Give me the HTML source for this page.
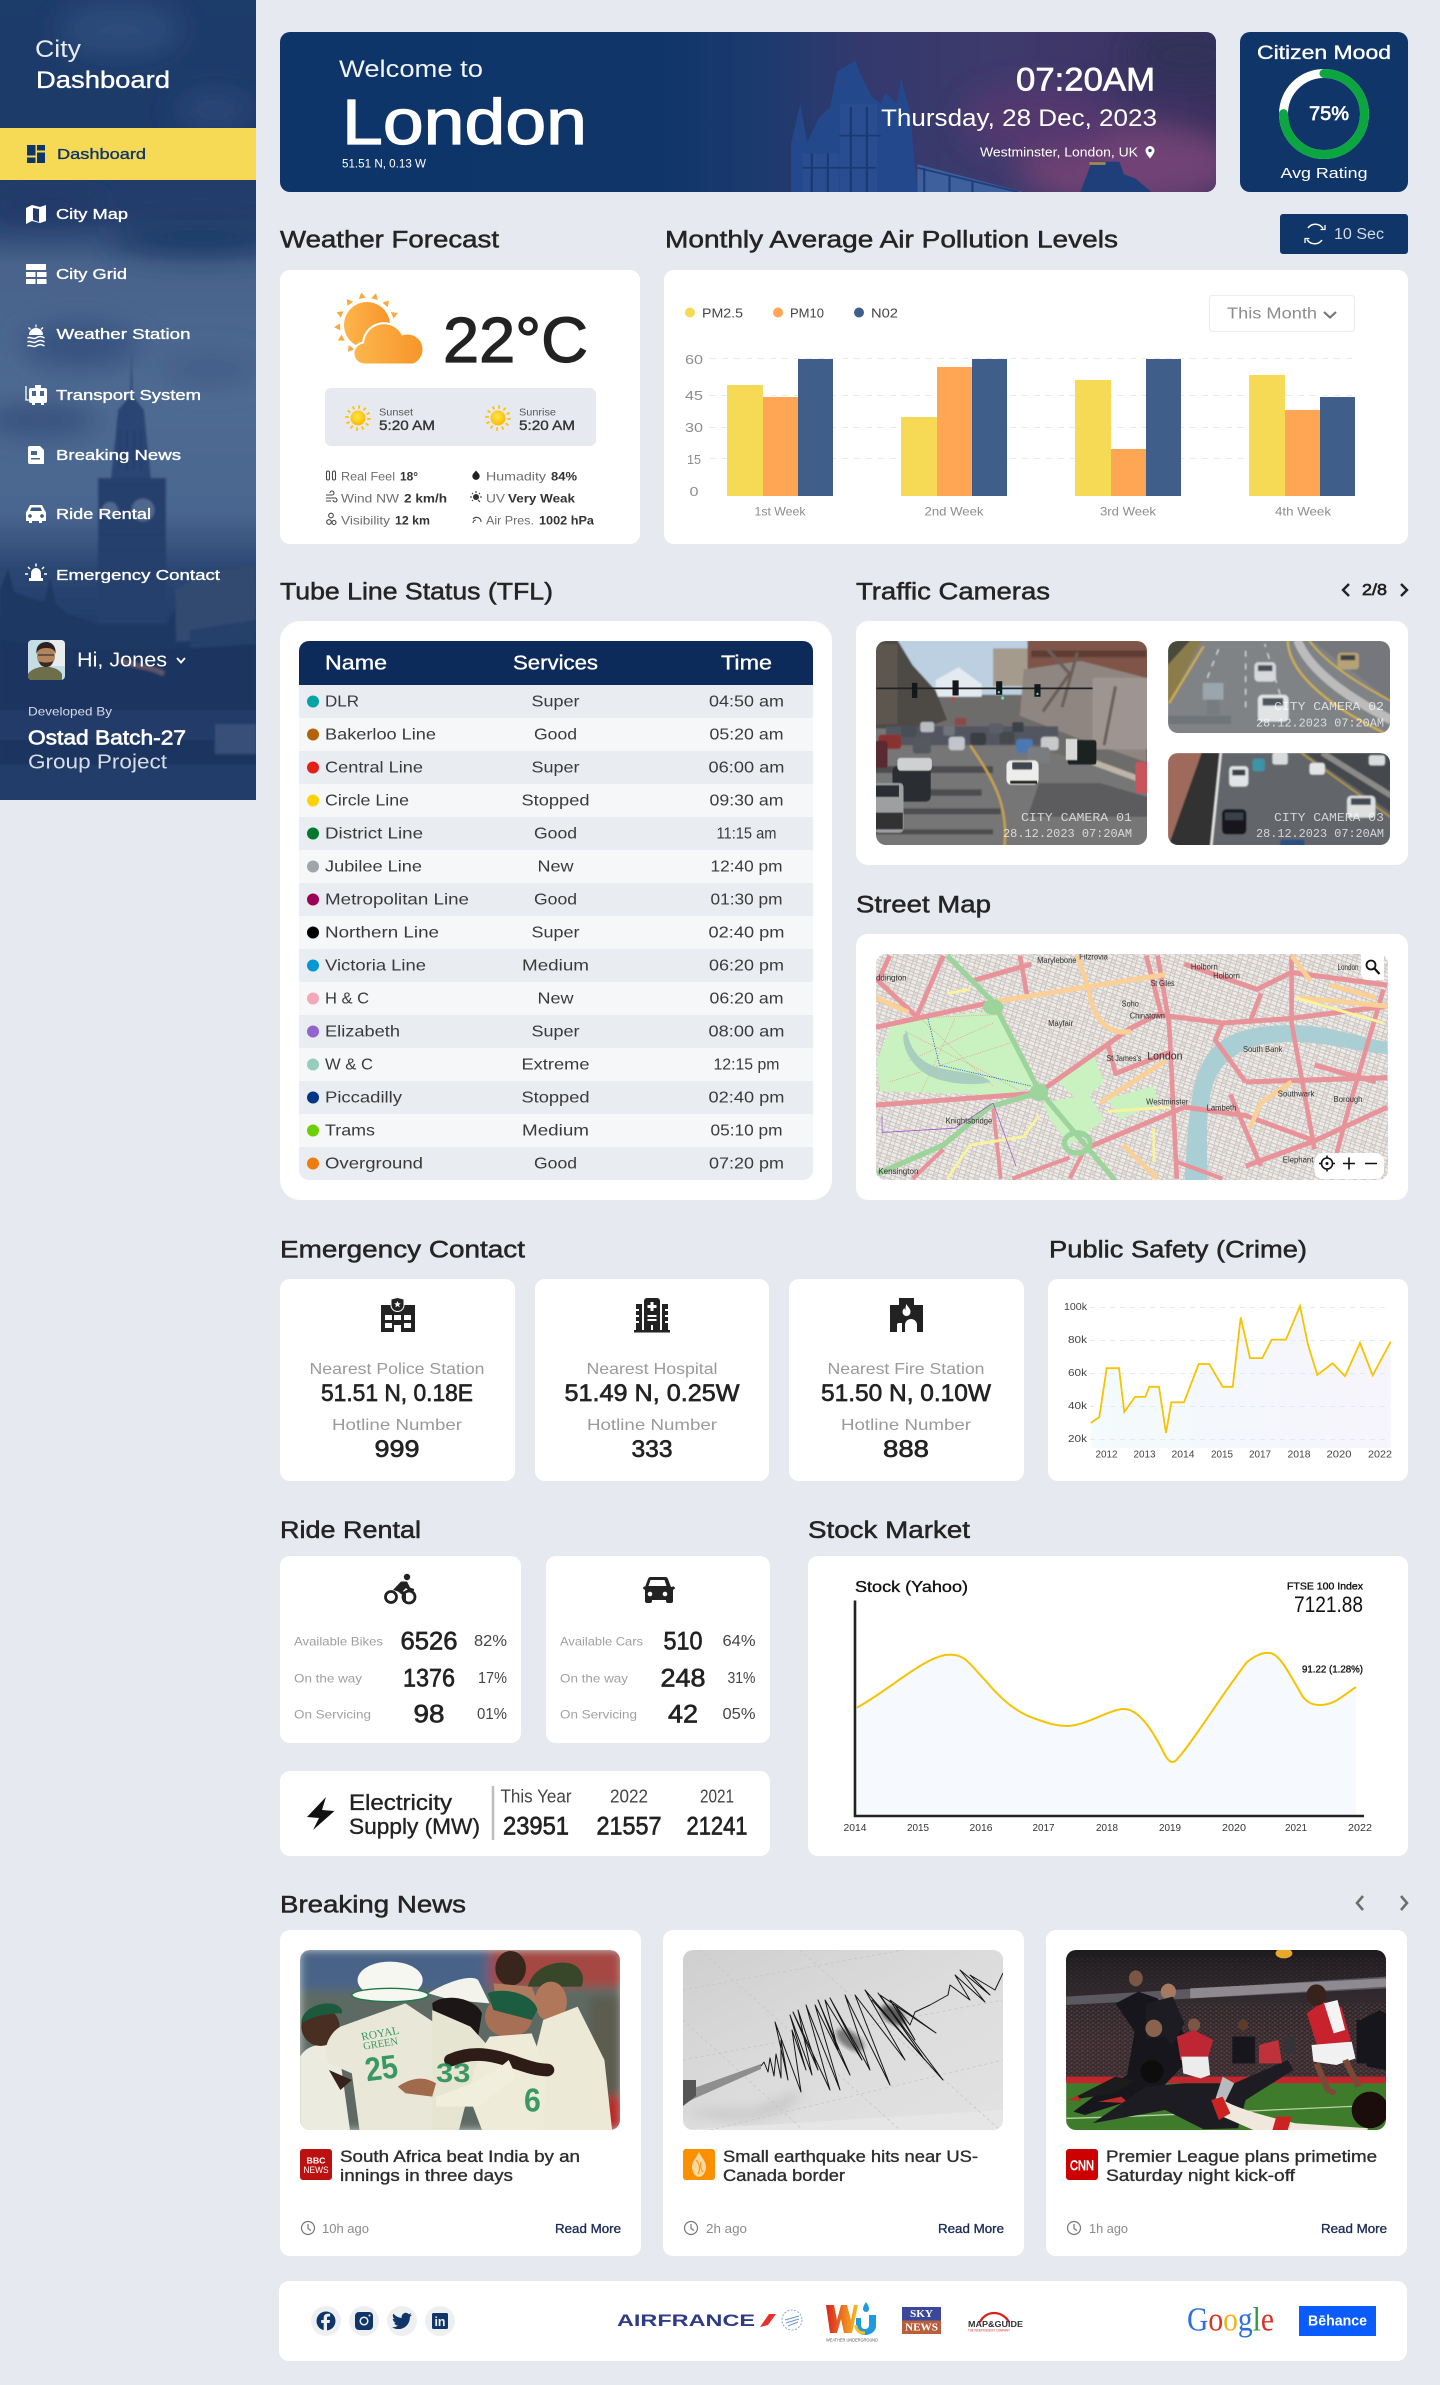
<!DOCTYPE html>
<html lang="en">
<head>
<meta charset="utf-8">
<title>City Dashboard</title>
<style>
html,body{margin:0;padding:0;background:#e6e9ef}
svg{display:block}
text{font-family:"Liberation Sans",Arial,sans-serif;fill:currentColor;dominant-baseline:central;translate:0 .7px}
.c{text-anchor:middle}
.e{text-anchor:end}
.m{stroke:currentColor;stroke-width:.35}
.m2{stroke:currentColor;stroke-width:.65}
.m3{stroke:currentColor;stroke-width:1.2;translate:0 0}
.h{font-size:24px;color:#242424;stroke:currentColor;stroke-width:.5;translate:0 1.1px}
.b{font-weight:700}
.mono{font-family:"Liberation Mono",monospace;fill:#fff;fill-opacity:.72}
.card{fill:#fff}
</style>
</head>
<body>
<svg xmlns="http://www.w3.org/2000/svg" width="1440" height="2385" viewBox="0 0 1440 2385">
<defs>
<linearGradient id="sb" gradientUnits="userSpaceOnUse" x1="0" y1="0" x2="0" y2="800">
<stop offset="0" stop-color="#1e3c6b"/><stop offset=".16" stop-color="#1c3a69"/><stop offset=".27" stop-color="#263f6d"/><stop offset=".33" stop-color="#48638c"/><stop offset=".5" stop-color="#4f6b93"/><stop offset=".64" stop-color="#4a6690"/><stop offset=".71" stop-color="#2c4773"/><stop offset=".8" stop-color="#1f3a68"/><stop offset="1" stop-color="#1e3a66"/>
</linearGradient>
<linearGradient id="hero" x1="0" y1="0" x2="1" y2="0">
<stop offset="0" stop-color="#0e3569"/><stop offset=".4" stop-color="#0f3569"/><stop offset=".52" stop-color="#1d3a6e"/><stop offset=".62" stop-color="#33396d"/><stop offset=".78" stop-color="#3f3a6c"/><stop offset="1" stop-color="#3a2f5e"/>
</linearGradient>
<linearGradient id="sunG" x1="0" y1="0" x2="1" y2="0"><stop offset="0" stop-color="#fdb64c"/><stop offset="1" stop-color="#f7952a"/></linearGradient>
<radialGradient id="yel" cx=".45" cy=".4" r=".6"><stop offset="0" stop-color="#ffe94a"/><stop offset="1" stop-color="#ffb800"/></radialGradient>
<linearGradient id="crimeA" x1="0" y1="0" x2="1" y2="0"><stop offset="0" stop-color="#f3fbfc"/><stop offset="1" stop-color="#f6f4fc"/></linearGradient>
<linearGradient id="wu" x1="0" y1="0" x2="1" y2="0"><stop offset="0" stop-color="#d8231f"/><stop offset=".6" stop-color="#f08020"/><stop offset="1" stop-color="#f5c020"/></linearGradient>
<linearGradient id="seis" x1="0" y1="0" x2="1" y2="1"><stop offset="0" stop-color="#cfcfcf"/><stop offset=".5" stop-color="#dcdcdc"/><stop offset="1" stop-color="#e2e2e2"/></linearGradient>
<linearGradient id="crowd" x1="0" y1="0" x2="0" y2="1"><stop offset="0" stop-color="#1c1a1e"/><stop offset=".3" stop-color="#2e282c"/><stop offset=".7" stop-color="#3e3034"/><stop offset="1" stop-color="#3e3034"/></linearGradient>
<pattern id="streets" width="26" height="26" patternUnits="userSpaceOnUse" patternTransform="rotate(18)">
<rect width="26" height="26" fill="#eeeae5"/><path d="M0 6H26M0 15H26M0 22H26M7 0V26M18 0V26" stroke="#c3bfbe" stroke-width="2" fill="none"/><rect x="9" y="8" width="7" height="5" fill="#e3d2d0"/>
</pattern>
<pattern id="cr" width="14" height="12" patternUnits="userSpaceOnUse"><circle cx="3" cy="3" r="2.500" fill="#6a5858"/><circle cx="10" cy="8" r="2" fill="#7a4040"/><circle cx="11" cy="2" r="1.500" fill="#141214"/><circle cx="4" cy="9" r="1.800" fill="#141214"/></pattern>
<filter id="b1" x="-5%" y="-5%" width="110%" height="110%"><feGaussianBlur stdDeviation="1"/></filter>
<filter id="b2" x="-10%" y="-10%" width="120%" height="120%"><feGaussianBlur stdDeviation="2"/></filter>
<filter id="b6" x="-20%" y="-20%" width="140%" height="140%"><feGaussianBlur stdDeviation="6"/></filter>
<filter id="b14" x="-40%" y="-40%" width="180%" height="180%"><feGaussianBlur stdDeviation="14"/></filter>
<clipPath id="cSide"><rect width="256" height="800"/></clipPath>
<clipPath id="cHero"><rect x="280" y="32" width="936" height="160" rx="10"/></clipPath>
<clipPath id="cCam1"><rect x="876" y="641" width="271" height="204" rx="10"/></clipPath>
<clipPath id="cCam2"><rect x="1168" y="641" width="222" height="92" rx="10"/></clipPath>
<clipPath id="cCam3"><rect x="1168" y="753" width="222" height="92" rx="10"/></clipPath>
<clipPath id="cMap"><rect x="876" y="954" width="512" height="226" rx="10"/></clipPath>
<clipPath id="cN1"><rect x="300" y="1950" width="320" height="180" rx="10"/></clipPath>
<clipPath id="cN2"><rect x="683" y="1950" width="320" height="180" rx="10"/></clipPath>
<clipPath id="cN3"><rect x="1066" y="1950" width="320" height="180" rx="10"/></clipPath>
<clipPath id="cAv"><rect x="28" y="640" width="37" height="40" rx="4"/></clipPath>
<clipPath id="cTb"><path d="M299 651a10 10 0 0 1 10-10h494a10 10 0 0 1 10 10v519a10 10 0 0 1-10 10H309a10 10 0 0 1-10-10z"/></clipPath>
</defs>

<rect width="1440" height="2385" fill="#e6e9ef"/>

<!-- Sidebar -->
<g clip-path="url(#cSide)">
<rect width="256" height="800" fill="#1e3c6b"/>
<g filter="url(#b1)">
<rect x="-10" y="-10" width="276" height="820" fill="url(#sb)"/>
<g filter="url(#b14)">
<ellipse cx="120" cy="30" rx="60" ry="26" fill="#2f4d7b"/>
<ellipse cx="215" cy="110" rx="40" ry="20" fill="#2a4776"/>
<ellipse cx="200" cy="238" rx="90" ry="18" fill="#1d3a68"/>
<ellipse cx="50" cy="205" rx="60" ry="14" fill="#20396a"/>
<ellipse cx="80" cy="345" rx="60" ry="22" fill="#36517f"/>
<ellipse cx="40" cy="420" rx="60" ry="16" fill="#354f7c"/>
<ellipse cx="210" cy="370" rx="50" ry="14" fill="#3f5b86"/>
</g>
<g fill="#2a4573">
<path d="M131.500 352l1.500 44 11 14 3 30 4 38H111l4-38 3-30 12-14z"/>
<path d="M98 478h68v170H98z" fill="#273f6d"/>
</g>
<g fill="#50678d"><circle cx="110" cy="510" r="8"/><circle cx="143" cy="510" r="11.500"/></g>
<g stroke="#20396a" stroke-width="1" fill="none"><path d="M120 430v40M127 430v40M134 430v40M141 430v40M100 485h64M100 535h64M100 550h64"/></g>
<path d="M0 650V590l8-22 6 24 16 6 14 4 6-24 6 26 12 10 30 10h70l10-22 18 2 20-4 16 2 24-12v214H0z" fill="#1e3763"/>
<path d="M175 590l30-18 51-6v70l-80 6z" fill="#33486f"/>
<path d="M190 630l66-10v30l-66 10z" fill="#28406c"/>
<path d="M0 640l40 6 60 4h60l96-6v156H0z" fill="#1b3560"/>
<path d="M120 660c10 6 30 6 44 14" stroke="#5e5568" stroke-width="5" fill="none"/>
<path d="M0 710h256v30H0z" fill="#203b68"/>
<rect x="215" y="724" width="41" height="30" fill="#375079"/>
<path d="M0 765h256v35H0z" fill="#233e6a"/>
</g>
</g>
<g color="#fff">
<text x="35" y="49" font-size="24" textLength="46" lengthAdjust="spacingAndGlyphs" fill-opacity=".9">City</text>
<text x="36" y="80" font-size="24" class="m" textLength="134" lengthAdjust="spacingAndGlyphs">Dashboard</text>
</g>
<rect y="128" width="256" height="52" fill="#f6d955"/>
<g fill="#0f3569"><rect x="27" y="145" width="8.500" height="10.500"/><rect x="27" y="157.500" width="8.500" height="5.500"/><rect x="37" y="145" width="8" height="5.500"/><rect x="37" y="152.500" width="8" height="10.500"/></g>
<text x="57" y="154" font-size="15" class="m" color="#0f3569" textLength="89" lengthAdjust="spacingAndGlyphs">Dashboard</text>
<g color="#fff" font-size="15" class="m">
<text x="56" y="214" textLength="72" lengthAdjust="spacingAndGlyphs">City Map</text>
<text x="56" y="274" textLength="71" lengthAdjust="spacingAndGlyphs">City Grid</text>
<text x="56.500" y="334" textLength="134" lengthAdjust="spacingAndGlyphs">Weather Station</text>
<text x="56" y="395" textLength="145" lengthAdjust="spacingAndGlyphs">Transport System</text>
<text x="56" y="455" textLength="125" lengthAdjust="spacingAndGlyphs">Breaking News</text>
<text x="56" y="514" textLength="95" lengthAdjust="spacingAndGlyphs">Ride Rental</text>
<text x="56" y="575" textLength="164" lengthAdjust="spacingAndGlyphs">Emergency Contact</text>
</g>
<g fill="#fff">
<path d="M26 208l6-3 8 2 6-2v16l-6 2-8-2-6 3zM33 208v12l6 2v-13z" fill-rule="evenodd"/>
<path d="M26 264h20v6H26zM26 272h9.500v5H26zM37 272h9.500v5H37zM26 279h9.500v5H26zM37 279h9.500v5H37z"/>
<path d="M29 335a7 7 0 0 1 14 0zM35.400 324.500h1.200v3h-1.200zM28 328l1-1 2 2-1 1zM43.500 328l-1-1-2 2 1 1z"/>
<path d="M27.500 338c3-2 5 2 8.500 0s5-2 8.500 0M27.500 342c3-2 5 2 8.500 0s5-2 8.500 0M27.500 346c3-2 5 2 8.500 0s5-2 8.500 0" stroke="#fff" stroke-width="1.500" fill="none"/>
<path d="M31 388h14a2 2 0 0 1 2 2v11a2 2 0 0 1-2 2H31a2 2 0 0 1-2-2v-11a2 2 0 0 1 2-2zM35 385h6v3h-6z"/>
<path d="M26 386v14h3" stroke="#fff" stroke-width="1.300" fill="none"/>
<rect x="32" y="391" width="4" height="5" fill="#4a658e"/><rect x="40" y="391" width="4" height="5" fill="#4a658e"/>
<path d="M32 403h3v2h-3zM41 403h3v2h-3z"/>
<path d="M30 446h10l4 4v14H30a2 2 0 0 1-2-2v-14a2 2 0 0 1 2-2z"/>
<rect x="31" y="451" width="6" height="4" fill="#4a658e"/><rect x="31" y="458" width="9" height="1.500" fill="#4a658e"/>
<path d="M30 505h12l3 6a3 3 0 0 1 1 2.500V521h-4v2h-3v-2h-7v2h-3v-2H26v-7.500a3 3 0 0 1 1-2.500z"/>
<path d="M31.500 507.500h9l1.500 3.500H30z" fill="#3b567f"/><circle cx="30" cy="516" r="1.800" fill="#3b567f"/><circle cx="42" cy="516" r="1.800" fill="#3b567f"/>
<path d="M31 578v-5a5 5 0 0 1 10 0v5h2v3H29v-3z"/>
<path d="M36 563.500v3M28 567l2 2M44 567l-2 2M25 574h3M44 574h3" stroke="#fff" stroke-width="1.500"/>
</g>
<g clip-path="url(#cAv)">
<rect x="28" y="640" width="37" height="40" fill="#c5dde4"/>
<rect x="50" y="640" width="15" height="26" fill="#e7ecef"/>
<path d="M28 680v-6c3-5 9-6 12-7h10c4 1 9 2 12 7v6z" fill="#6d6f4a"/>
<ellipse cx="46" cy="656" rx="9" ry="11" fill="#b4845f"/>
<path d="M36.500 654c-1-10 6-12 10-12s10 3 9 12c-1-4-3-6-9-6s-9 2-10 6z" fill="#2c211c"/>
<path d="M39 661c1 5 4 6 7 6s6-1 7-6c-2 2-12 2-14 0z" fill="#3a2a22"/>
<path d="M38 655h16" stroke="#3a3532" stroke-width="1.300"/>
</g>
<text x="77" y="660" font-size="20" color="#fff" textLength="90" lengthAdjust="spacingAndGlyphs">Hi, Jones</text>
<path d="M177 658l4 4.500 4-4.500" fill="none" stroke="#fff" stroke-width="1.800"/>
<text x="28" y="711" font-size="12" color="#d4dbe6" textLength="84" lengthAdjust="spacingAndGlyphs">Developed By</text>
<text x="28" y="738" font-size="20" class="m2" color="#fff" textLength="158" lengthAdjust="spacingAndGlyphs">Ostad Batch-27</text>
<text x="28" y="762" font-size="20" color="#d7dee9" textLength="139" lengthAdjust="spacingAndGlyphs">Group Project</text>

<!-- Hero -->
<g clip-path="url(#cHero)">
<rect x="280" y="32" width="936" height="160" fill="url(#hero)"/>
<g filter="url(#b14)">
<ellipse cx="1130" cy="165" rx="110" ry="42" fill="#704274"/>
<ellipse cx="1040" cy="120" rx="80" ry="36" fill="#54396e" opacity=".9"/>
<ellipse cx="1190" cy="55" rx="60" ry="30" fill="#33305a"/>
</g>
<g transform="translate(720 0) scale(.459 .357)">
<path d="M155 538V400l20-110 15 110 25-70 25-30 15-100 40-30 5 20 30 80 20 20 10-30 25 30 10-70 20 100 5 80 10 138z" fill="#23488c"/>
<path d="M262 290h80v248h-80zM180 430h80v108h-80z" fill="#2a4d92"/>
<path d="M285 300v238M320 300v238M200 430v108M235 430v108M260 380h90M180 470h160" stroke="#1a3a72" stroke-width="5" fill="none"/>
<path d="M430 460l230 78H430z" fill="#3e619e"/>
<path d="M430 470l220 68M445 470v68M500 490v48M550 505v33" stroke="#1f3f7c" stroke-width="5" fill="none"/>
<path d="M785 538l25-85h60l10 35 25 12 35 38z" fill="#1f3f7a"/>
<path d="M805 458h35" stroke="#a78a4a" stroke-width="8"/>
</g>
</g>
<g color="#fff">
<text x="339" y="69" font-size="24" textLength="144" lengthAdjust="spacingAndGlyphs" fill-opacity=".95">Welcome to</text>
<text x="342" y="122" font-size="64" class="m3" textLength="245" lengthAdjust="spacingAndGlyphs">London</text>
<text x="342" y="163" font-size="12" textLength="84" lengthAdjust="spacingAndGlyphs">51.51 N, 0.13 W</text>
<text x="1016" y="79" font-size="32" class="m2" textLength="139" lengthAdjust="spacingAndGlyphs">07:20AM</text>
<text x="881" y="118" font-size="24" textLength="276" lengthAdjust="spacingAndGlyphs">Thursday, 28 Dec, 2023</text>
<text x="980" y="152" font-size="12.500" textLength="158" lengthAdjust="spacingAndGlyphs">Westminster, London, UK</text>
</g>
<path d="M1150 146a4.500 4.500 0 0 1 4.500 4.500c0 3-4.500 8-4.500 8s-4.500-5-4.500-8a4.500 4.500 0 0 1 4.500-4.500z" fill="#fff"/><circle cx="1150" cy="150.500" r="1.700" fill="#3d3a6c"/>

<!-- Citizen mood -->
<rect x="1240" y="32" width="168" height="160" rx="10" fill="#0f3569"/>
<text x="1324" y="53" class="c m" font-size="19" color="#fff" textLength="134" lengthAdjust="spacingAndGlyphs">Citizen Mood</text>
<circle cx="1324" cy="114" r="40.500" fill="none" stroke="#fff" stroke-width="9"/>
<circle cx="1324" cy="114" r="40.500" fill="none" stroke="#0ca640" stroke-width="9" stroke-linecap="round" stroke-dasharray="190.900 254.500" transform="rotate(-90 1324 114)"/>
<text x="1329" y="114" class="c m2" font-size="19" color="#fff" textLength="40" lengthAdjust="spacingAndGlyphs">75%</text>
<text x="1324" y="173" class="c" font-size="15" color="#fff" textLength="87" lengthAdjust="spacingAndGlyphs">Avg Rating</text>

<!-- Section heads row 1 -->
<text x="280" y="239" class="h" textLength="219" lengthAdjust="spacingAndGlyphs">Weather Forecast</text>
<text x="665" y="239" class="h" textLength="453" lengthAdjust="spacingAndGlyphs">Monthly Average Air Pollution Levels</text>
<rect x="1280" y="214" width="128" height="40" rx="3" fill="#0f3569"/>
<g fill="none" stroke="#fff" stroke-width="1.500">
<path d="M1308 228a9 9 0 0 1 15 .500M1322 240a9 9 0 0 1-15-.500"/>
<path d="M1325 225v4.500h-4.500M1305 243v-4.500h4.500" stroke-width="1.300"/>
</g>
<text x="1334" y="234" font-size="15.500" color="#d4dae4" textLength="50" lengthAdjust="spacingAndGlyphs">10 Sec</text>

<!-- Weather card -->
<rect x="280" y="270" width="360" height="274" rx="10" class="card"/>
<g fill="#fba83e"><circle cx="367" cy="325" r="23" fill="url(#sunG)"/>
<g><polygon points="-3.500,-27 3.500,-27 0,-33" transform="translate(367 325) rotate(-38)"/><polygon points="-3.500,-27 3.500,-27 0,-33" transform="translate(367 325) rotate(-10)"/><polygon points="-3.500,-27 3.500,-27 0,-33" transform="translate(367 325) rotate(16)"/><polygon points="-3.500,-27 3.500,-27 0,-33" transform="translate(367 325) rotate(42)"/><polygon points="-3.500,-27 3.500,-27 0,-33" transform="translate(367 325) rotate(69)"/><polygon points="-3.500,-27 3.500,-27 0,-33" transform="translate(367 325) rotate(-67)"/><polygon points="-3.500,-27 3.500,-27 0,-33" transform="translate(367 325) rotate(-94)"/><polygon points="-3.500,-27 3.500,-27 0,-33" transform="translate(367 325) rotate(-118)"/><polygon points="-3.500,-27 3.500,-27 0,-33" transform="translate(367 325) rotate(-145)"/></g></g>
<path d="M365 363.500a10 10 0 0 1-1-20 20 20 0 0 1 38-8 14 14 0 0 1 11 28z" fill="url(#sunG)" stroke="#fff" stroke-width="4" paint-order="stroke"/>
<text x="443" y="340" font-size="64" class="m3" color="#222" textLength="145" lengthAdjust="spacingAndGlyphs">22°C</text>
<rect x="325" y="388" width="271" height="58" rx="6" fill="#e6e9ef"/>
<g><circle cx="358" cy="418" r="11" fill="none" stroke="#ffc107" stroke-width="3.500" stroke-dasharray="1.800 3.950"/><circle cx="358" cy="418" r="7.500" fill="url(#yel)"/>
<circle cx="498" cy="418" r="11" fill="none" stroke="#ffc107" stroke-width="3.500" stroke-dasharray="1.800 3.950"/><circle cx="498" cy="418" r="7.500" fill="url(#yel)"/></g>
<text x="379" y="412" font-size="10.500" color="#555" textLength="34" lengthAdjust="spacingAndGlyphs">Sunset</text>
<text x="379" y="424.500" font-size="14" class="m" color="#333" textLength="56" lengthAdjust="spacingAndGlyphs">5:20 AM</text>
<text x="519" y="412" font-size="10.500" color="#555" textLength="37" lengthAdjust="spacingAndGlyphs">Sunrise</text>
<text x="519" y="424.500" font-size="14" class="m" color="#333" textLength="56" lengthAdjust="spacingAndGlyphs">5:20 AM</text>
<g font-size="12" color="#6d6d6d">
<text x="341" y="476" textLength="54" lengthAdjust="spacingAndGlyphs">Real Feel</text>
<text x="341" y="498" textLength="58" lengthAdjust="spacingAndGlyphs">Wind NW</text>
<text x="341" y="520" textLength="49" lengthAdjust="spacingAndGlyphs">Visibility</text>
<text x="486" y="476" textLength="60" lengthAdjust="spacingAndGlyphs">Humadity</text>
<text x="486" y="498" textLength="19" lengthAdjust="spacingAndGlyphs">UV</text>
<text x="486" y="520" textLength="48" lengthAdjust="spacingAndGlyphs">Air Pres.</text>
</g>
<g font-size="12" color="#333" class="b">
<text x="400" y="476" textLength="18" lengthAdjust="spacingAndGlyphs">18°</text>
<text x="404" y="498" textLength="43" lengthAdjust="spacingAndGlyphs">2 km/h</text>
<text x="395" y="520" textLength="35" lengthAdjust="spacingAndGlyphs">12 km</text>
<text x="551" y="476" textLength="26" lengthAdjust="spacingAndGlyphs">84%</text>
<text x="508" y="498" textLength="67" lengthAdjust="spacingAndGlyphs">Very Weak</text>
<text x="539" y="520" textLength="55" lengthAdjust="spacingAndGlyphs">1002 hPa</text>
</g>
<g fill="none" stroke="#444" stroke-width="1.100">
<rect x="326.500" y="471" width="3" height="9" rx="1.500"/><rect x="332.500" y="471" width="3" height="9" rx="1.500"/>
<path d="M326 495h6a2 2 0 1 0-2-2M326 498h9a2 2 0 1 1-2 2M326 501h5"/>
<circle cx="331" cy="515.500" r="2.300"/><circle cx="329" cy="522" r="2.300"/><circle cx="334" cy="522.500" r="2"/>
<path d="M473 519a4.500 4.500 0 0 1 8 3M473 523a3 3 0 0 1 3-3"/>
</g>
<path d="M476 470.500l3 3.500a3.700 3.700 0 1 1-6 0z" fill="#222"/>
<circle cx="476" cy="497" r="3" fill="#333"/><path d="M476 491v2M470 497h2M480 497h2M472 493l1 1M480 493l-1 1M472 501l1-1M480 502l-2-2" stroke="#333" stroke-width="1"/>

<!-- Air pollution chart -->
<rect x="664" y="270" width="744" height="274" rx="10" class="card"/>
<circle cx="690" cy="312.500" r="5" fill="#f6d955"/><circle cx="778" cy="312.500" r="5" fill="#ffa654"/><circle cx="859" cy="312.500" r="5" fill="#3f5f8a"/>
<g font-size="13" color="#444">
<text x="702" y="312.500" textLength="41" lengthAdjust="spacingAndGlyphs">PM2.5</text>
<text x="790" y="312.500" textLength="34" lengthAdjust="spacingAndGlyphs">PM10</text>
<text x="871" y="312.500" textLength="27" lengthAdjust="spacingAndGlyphs">N02</text>
</g>
<rect x="1209.500" y="295.500" width="145" height="36" rx="3" fill="#fff" stroke="#ececec"/>
<text x="1227" y="313.500" font-size="16" color="#8c8c8c" textLength="90" lengthAdjust="spacingAndGlyphs">This Month</text>
<path d="M1324 312l6 5.500 6-5.500" fill="none" stroke="#777" stroke-width="2.200"/>
<g font-size="13" color="#8c8c8c" class="c">
<text x="694" y="359" textLength="18" lengthAdjust="spacingAndGlyphs">60</text>
<text x="694" y="395" textLength="18" lengthAdjust="spacingAndGlyphs">45</text>
<text x="694" y="427" textLength="18" lengthAdjust="spacingAndGlyphs">30</text>
<text x="694" y="459" textLength="14" lengthAdjust="spacingAndGlyphs">15</text>
<text x="694" y="491" textLength="9" lengthAdjust="spacingAndGlyphs">0</text>
</g>
<path d="M710 358.500H1355M710 395.500H1355M710 427.500H1355M710 458.500H1355" stroke="#e9e9e9" stroke-dasharray="6 6"/>
<g fill="#f6d955"><rect x="727" y="385" width="36" height="111"/><rect x="901" y="417" width="36" height="79"/><rect x="1075" y="380" width="36" height="116"/><rect x="1249" y="375" width="36" height="121"/></g>
<g fill="#ffa654"><rect x="763" y="397" width="35" height="99"/><rect x="937" y="367" width="35" height="129"/><rect x="1111" y="449" width="35" height="47"/><rect x="1285" y="410" width="35" height="86"/></g>
<g fill="#3f5f8a"><rect x="798" y="359" width="35" height="137"/><rect x="972" y="359" width="35" height="137"/><rect x="1146" y="359" width="35" height="137"/><rect x="1320" y="397" width="35" height="99"/></g>
<g font-size="12" color="#8c8c8c" class="c">
<text x="780" y="511" textLength="51" lengthAdjust="spacingAndGlyphs">1st Week</text>
<text x="954" y="511" textLength="59" lengthAdjust="spacingAndGlyphs">2nd Week</text>
<text x="1128" y="511" textLength="56" lengthAdjust="spacingAndGlyphs">3rd Week</text>
<text x="1303" y="511" textLength="56" lengthAdjust="spacingAndGlyphs">4th Week</text>
</g>

<!-- Tube table -->
<text x="280" y="591" class="h" textLength="273" lengthAdjust="spacingAndGlyphs">Tube Line Status (TFL)</text>
<rect x="280" y="621" width="552" height="579" rx="20" class="card"/>
<g clip-path="url(#cTb)">
<rect x="299" y="641" width="514" height="44" fill="#0c2b5a"/>
<g fill="#e9ecf1"><rect x="299" y="685" width="514" height="33"/><rect x="299" y="751" width="514" height="33"/><rect x="299" y="817" width="514" height="33"/><rect x="299" y="883" width="514" height="33"/><rect x="299" y="949" width="514" height="33"/><rect x="299" y="1015" width="514" height="33"/><rect x="299" y="1081" width="514" height="33"/><rect x="299" y="1147" width="514" height="33"/></g>
<g fill="#f6f7f9"><rect x="299" y="718" width="514" height="33"/><rect x="299" y="784" width="514" height="33"/><rect x="299" y="850" width="514" height="33"/><rect x="299" y="916" width="514" height="33"/><rect x="299" y="982" width="514" height="33"/><rect x="299" y="1048" width="514" height="33"/><rect x="299" y="1114" width="514" height="33"/></g>
</g>
<g font-size="20" class="m" color="#fff">
<text x="325" y="663" textLength="62" lengthAdjust="spacingAndGlyphs">Name</text>
<text x="555.500" y="663" class="c m" textLength="85" lengthAdjust="spacingAndGlyphs">Services</text>
<text x="746.500" y="663" class="c m" textLength="51" lengthAdjust="spacingAndGlyphs">Time</text>
</g>
<circle cx="313" cy="701.500" r="6" fill="#00a4a7"/><circle cx="313" cy="734.500" r="6" fill="#b36305"/><circle cx="313" cy="767.500" r="6" fill="#e32017"/><circle cx="313" cy="800.500" r="6" fill="#ffd300"/><circle cx="313" cy="833.500" r="6" fill="#00782a"/><circle cx="313" cy="866.500" r="6" fill="#a0a5a9"/><circle cx="313" cy="899.500" r="6" fill="#9b0056"/><circle cx="313" cy="932.500" r="6" fill="#000"/><circle cx="313" cy="965.500" r="6" fill="#0098d4"/><circle cx="313" cy="998.500" r="6" fill="#f3a9bb"/><circle cx="313" cy="1031.500" r="6" fill="#9364cd"/><circle cx="313" cy="1064.500" r="6" fill="#95cdba"/><circle cx="313" cy="1097.500" r="6" fill="#003688"/><circle cx="313" cy="1130.500" r="6" fill="#6bcf00"/><circle cx="313" cy="1163.500" r="6" fill="#ee7c0e"/>
<g font-size="16" color="#3a3a3a">
<text x="325" y="701.500" textLength="34" lengthAdjust="spacingAndGlyphs">DLR</text>
<text x="325" y="734.500" textLength="111" lengthAdjust="spacingAndGlyphs">Bakerloo Line</text>
<text x="325" y="767.500" textLength="98" lengthAdjust="spacingAndGlyphs">Central Line</text>
<text x="325" y="800.500" textLength="84" lengthAdjust="spacingAndGlyphs">Circle Line</text>
<text x="325" y="833.500" textLength="98" lengthAdjust="spacingAndGlyphs">District Line</text>
<text x="325" y="866.500" textLength="97" lengthAdjust="spacingAndGlyphs">Jubilee Line</text>
<text x="325" y="899.500" textLength="144" lengthAdjust="spacingAndGlyphs">Metropolitan Line</text>
<text x="325" y="932.500" textLength="114" lengthAdjust="spacingAndGlyphs">Northern Line</text>
<text x="325" y="965.500" textLength="101" lengthAdjust="spacingAndGlyphs">Victoria Line</text>
<text x="325" y="998.500" textLength="44" lengthAdjust="spacingAndGlyphs">H &amp; C</text>
<text x="325" y="1031.500" textLength="75" lengthAdjust="spacingAndGlyphs">Elizabeth</text>
<text x="325" y="1064.500" textLength="48" lengthAdjust="spacingAndGlyphs">W &amp; C</text>
<text x="325" y="1097.500" textLength="77" lengthAdjust="spacingAndGlyphs">Piccadilly</text>
<text x="325" y="1130.500" textLength="50" lengthAdjust="spacingAndGlyphs">Trams</text>
<text x="325" y="1163.500" textLength="98" lengthAdjust="spacingAndGlyphs">Overground</text>
</g>
<g font-size="16" color="#3a3a3a" class="c">
<text x="555.500" y="701.500" textLength="48" lengthAdjust="spacingAndGlyphs">Super</text>
<text x="555.500" y="734.500" textLength="43" lengthAdjust="spacingAndGlyphs">Good</text>
<text x="555.500" y="767.500" textLength="48" lengthAdjust="spacingAndGlyphs">Super</text>
<text x="555.500" y="800.500" textLength="68" lengthAdjust="spacingAndGlyphs">Stopped</text>
<text x="555.500" y="833.500" textLength="43" lengthAdjust="spacingAndGlyphs">Good</text>
<text x="555.500" y="866.500" textLength="36" lengthAdjust="spacingAndGlyphs">New</text>
<text x="555.500" y="899.500" textLength="43" lengthAdjust="spacingAndGlyphs">Good</text>
<text x="555.500" y="932.500" textLength="48" lengthAdjust="spacingAndGlyphs">Super</text>
<text x="555.500" y="965.500" textLength="67" lengthAdjust="spacingAndGlyphs">Medium</text>
<text x="555.500" y="998.500" textLength="36" lengthAdjust="spacingAndGlyphs">New</text>
<text x="555.500" y="1031.500" textLength="48" lengthAdjust="spacingAndGlyphs">Super</text>
<text x="555.500" y="1064.500" textLength="68" lengthAdjust="spacingAndGlyphs">Extreme</text>
<text x="555.500" y="1097.500" textLength="68" lengthAdjust="spacingAndGlyphs">Stopped</text>
<text x="555.500" y="1130.500" textLength="67" lengthAdjust="spacingAndGlyphs">Medium</text>
<text x="555.500" y="1163.500" textLength="43" lengthAdjust="spacingAndGlyphs">Good</text>
<text x="746.500" y="701.500" textLength="75" lengthAdjust="spacingAndGlyphs">04:50 am</text>
<text x="746.500" y="734.500" textLength="74" lengthAdjust="spacingAndGlyphs">05:20 am</text>
<text x="746.500" y="767.500" textLength="76" lengthAdjust="spacingAndGlyphs">06:00 am</text>
<text x="746.500" y="800.500" textLength="74" lengthAdjust="spacingAndGlyphs">09:30 am</text>
<text x="746.500" y="833.500" textLength="60" lengthAdjust="spacingAndGlyphs">11:15 am</text>
<text x="746.500" y="866.500" textLength="72" lengthAdjust="spacingAndGlyphs">12:40 pm</text>
<text x="746.500" y="899.500" textLength="72" lengthAdjust="spacingAndGlyphs">01:30 pm</text>
<text x="746.500" y="932.500" textLength="76" lengthAdjust="spacingAndGlyphs">02:40 pm</text>
<text x="746.500" y="965.500" textLength="75" lengthAdjust="spacingAndGlyphs">06:20 pm</text>
<text x="746.500" y="998.500" textLength="74" lengthAdjust="spacingAndGlyphs">06:20 am</text>
<text x="746.500" y="1031.500" textLength="76" lengthAdjust="spacingAndGlyphs">08:00 am</text>
<text x="746.500" y="1064.500" textLength="66" lengthAdjust="spacingAndGlyphs">12:15 pm</text>
<text x="746.500" y="1097.500" textLength="76" lengthAdjust="spacingAndGlyphs">02:40 pm</text>
<text x="746.500" y="1130.500" textLength="72" lengthAdjust="spacingAndGlyphs">05:10 pm</text>
<text x="746.500" y="1163.500" textLength="75" lengthAdjust="spacingAndGlyphs">07:20 pm</text>
</g>

<!-- Traffic cameras -->
<text x="856" y="591" class="h" textLength="194" lengthAdjust="spacingAndGlyphs">Traffic Cameras</text>
<path d="M1349 584l-6 6 6 6M1401 584l6 6-6 6" fill="none" stroke="#222" stroke-width="2.400"/>
<text x="1362" y="590" font-size="16" class="m2" color="#222" textLength="25" lengthAdjust="spacingAndGlyphs">2/8</text>
<rect x="856" y="621" width="552" height="244" rx="12" class="card"/>
<g clip-path="url(#cCam1)"><g transform="translate(840 560) scale(.3827 .4209)"><g filter="url(#b2)">
<rect x="90" y="190" width="720" height="490" fill="#6e6c6a"/>
<path d="M140 190H490V320H300L140 300z" fill="#bcd0e2"/>
<path d="M250 285l60-30 60 40v30H250z" fill="#e4ebf0"/>
<path d="M90 190h60l40 60 60 60 30 70-100 30-90 10z" fill="#4e4a45"/>
<path d="M90 200h60v190H90z" fill="#5d5750"/>
<path d="M490 190H810V310H490z" fill="#7f5448"/>
<path d="M500 215h300v16H500z" fill="#5f3c34"/>
<path d="M400 210h90v90h-90z" fill="#a49b8c"/>
<path d="M480 260l150-20 170 40v200L640 430 470 370z" fill="#8f8682"/>
<path d="M660 280h150v170H660z" fill="#9e9590"/>
<path d="M540 210l60 60-70 90M620 220l-40 130M720 300l-30 140" stroke="#6a5e56" stroke-width="8" fill="none"/>
<path d="M90 400L320 400 810 520V680H90z" fill="#767676"/>
<path d="M90 490H400V506H90zM90 545H370V560H90zM90 590H420V604H90zM90 640H400V652H90z" fill="#4d4d50"/>
<path d="M520 530H680L810 565V610H490z" fill="#5c5c5f"/>
<path d="M340 440c60 80 100 140 90 240" fill="none" stroke="#c8a44a" stroke-width="6"/>
<path d="M660 480l120 40" stroke="#bdb6a8" stroke-width="14"/>
<g>
<path d="M120 395H570V440H120z" fill="#525660"/>
<rect x="100" y="415" width="60" height="34" rx="8" fill="#8a3030"/><rect x="190" y="420" width="48" height="40" rx="8" fill="#55595f"/><rect x="284" y="420" width="42" height="32" rx="8" fill="#c2c5ca"/><rect x="340" y="410" width="42" height="30" rx="8" fill="#3a3d42"/><rect x="416" y="408" width="40" height="30" rx="8" fill="#45484e"/><rect x="460" y="425" width="44" height="34" rx="8" fill="#4b78b0"/><rect x="525" y="420" width="46" height="32" rx="8" fill="#c7c8ca"/>
<rect x="160" y="395" width="40" height="26" rx="6" fill="#4a4e56"/><rect x="210" y="385" width="36" height="24" rx="6" fill="#b9bbc0"/><rect x="270" y="395" width="30" height="22" rx="5" fill="#70747a"/><rect x="300" y="375" width="30" height="18" rx="4" fill="#8a4a48"/><rect x="390" y="388" width="36" height="24" rx="6" fill="#5a5e66"/><rect x="450" y="385" width="30" height="24" rx="5" fill="#3e4248"/>
</g></g>
<g>
<path d="M95 305H660" stroke="#222" stroke-width="4"/>
<path d="M188 292h14v36h-14zM294 286h16v36h-16zM408 288h16v32h-16zM508 295h16v30h-16z" fill="#15181b"/>
<circle cx="415" cy="314" r="3" fill="#5fe0a8"/><circle cx="516" cy="318" r="3" fill="#5fe0a8"/>
<circle cx="295" cy="330" r="4" fill="#e03a3a"/><circle cx="425" cy="328" r="4" fill="#5fe0a8"/>
</g>
<g filter="url(#b1)">
<rect x="490" y="445" width="58" height="38" rx="8" fill="#7a7d80"/>
<rect x="595" y="428" width="75" height="58" rx="6" fill="#1f2023"/><rect x="590" y="425" width="30" height="50" fill="#d8d8d6"/>
<rect x="435" y="476" width="84" height="58" rx="12" fill="#ededeb"/><rect x="450" y="480" width="52" height="18" rx="3" fill="#41474f"/><rect x="445" y="524" width="70" height="8" fill="#222"/>
<rect x="137" y="490" width="100" height="84" rx="12" fill="#2c2d30"/><rect x="150" y="470" width="90" height="30" rx="8" fill="#cfd0d2"/>
<rect x="90" y="530" width="76" height="118" rx="10" fill="#9d9fa1"/><rect x="94" y="535" width="60" height="28" fill="#2a2d33"/><rect x="92" y="600" width="72" height="40" fill="#333"/>
<rect x="772" y="480" width="32" height="74" rx="6" fill="#c8545c"/>
<rect x="90" y="430" width="34" height="64" rx="6" fill="#5a2b30"/>
</g></g></g>
<text x="1021" y="817.500" class="mono" font-size="12" textLength="111" lengthAdjust="spacingAndGlyphs">CITY CAMERA 01</text>
<text x="1003" y="833.500" class="mono" font-size="12" textLength="129" lengthAdjust="spacingAndGlyphs">28.12.2023 07:20AM</text>

<g clip-path="url(#cCam2)"><g transform="translate(840 560) scale(.3827 .4209)"><g filter="url(#b2)">
<rect x="856" y="190" width="590" height="225" fill="#808386"/>
<path d="M856 190h90L860 340H856z" fill="#8b7d4c"/>
<path d="M856 190h60l-60 60z" fill="#4a4a3c"/>
<path d="M860 340L950 205" stroke="#d6b13c" stroke-width="5"/>
<path d="M1170 190c0 70 90 150 250 220" stroke="#d8b43a" stroke-width="5" fill="none"/>
<path d="M1195 190c30 70 120 130 245 190" stroke="#bcbcbc" stroke-width="22" fill="none"/>
<path d="M1225 190c40 50 120 100 215 145" stroke="#d8b43a" stroke-width="4" fill="none"/>
<path d="M1230 190h210v145z" fill="#74777b"/>
<path d="M960 280l30-70M1060 350v-140M1150 320l-40-120" stroke="#e0e0e0" stroke-width="3" stroke-dasharray="14 16"/>
<rect x="1083" y="243" width="56" height="46" rx="10" fill="#d6d8da"/><rect x="1092" y="250" width="38" height="14" fill="#4b4f55"/>
<rect x="1300" y="220" width="56" height="40" rx="9" fill="#b5a274"/><rect x="1308" y="226" width="38" height="12" fill="#3e4046"/>
<rect x="1092" y="320" width="80" height="64" rx="12" fill="#e1e3e5"/><rect x="1104" y="328" width="54" height="18" fill="#50545c"/>
<path d="M856 370h165v20H856z" fill="#70757a"/><rect x="948" y="292" width="54" height="40" fill="#9aa5ac"/><rect x="958" y="332" width="34" height="36" fill="#777c80"/>
</g></g></g>
<text x="1274" y="706.500" class="mono" font-size="12" textLength="110" lengthAdjust="spacingAndGlyphs">CITY CAMERA 02</text>
<text x="1256" y="723" class="mono" font-size="12" textLength="128" lengthAdjust="spacingAndGlyphs">28.12.2023 07:20AM</text>

<g clip-path="url(#cCam3)"><g transform="translate(840 560) scale(.3827 .4209)"><g filter="url(#b2)">
<rect x="856" y="458" width="590" height="222" fill="#62666a"/>
<path d="M856 458h100l-85 222H856z" fill="#9f6a5c"/>
<path d="M945 458h48l-25 222H858z" fill="#333231"/>
<path d="M995 458L970 680" stroke="#e8e8e8" stroke-width="6"/>
<path d="M1215 458L1440 600V458z" fill="#454a4d"/>
<path d="M1205 458L1440 612" stroke="#b89a3c" stroke-width="4"/>
<path d="M1260 458L1440 560" stroke="#8a8a88" stroke-width="14"/>
<rect x="1017" y="490" width="50" height="48" rx="9" fill="#e1e3e5"/><rect x="1025" y="498" width="34" height="14" fill="#3b3f45"/>
<rect x="1078" y="472" width="32" height="30" rx="7" fill="#3a94a8"/><rect x="1130" y="458" width="40" height="28" rx="6" fill="#d9dbdd"/><rect x="1227" y="482" width="40" height="28" rx="7" fill="#e3e4e6"/><rect x="1382" y="464" width="42" height="24" rx="6" fill="#d9dbdd"/>
<rect x="998" y="592" width="64" height="60" rx="11" fill="#14161c"/><rect x="1006" y="600" width="48" height="18" fill="#3a4048"/>
<rect x="1325" y="560" width="74" height="52" rx="11" fill="#dedfe1"/><rect x="1335" y="566" width="52" height="16" fill="#444a52"/>
<rect x="1150" y="664" width="64" height="16" rx="6" fill="#2a4f80"/>
</g></g></g>
<text x="1274" y="817.500" class="mono" font-size="12" textLength="110" lengthAdjust="spacingAndGlyphs">CITY CAMERA 03</text>
<text x="1256" y="833.500" class="mono" font-size="12" textLength="128" lengthAdjust="spacingAndGlyphs">28.12.2023 07:20AM</text>

<!-- Street map -->
<text x="856" y="904" class="h" textLength="135" lengthAdjust="spacingAndGlyphs">Street Map</text>
<rect x="856" y="934" width="552" height="266" rx="12" class="card"/>
<g clip-path="url(#cMap)"><g transform="translate(840 560) scale(.3827 .4209)">
<rect x="90" y="930" width="1345" height="545" fill="url(#streets)"/>
<path d="M140 1095l280-25 85 180 -60 22-340 -10-10 -70z" fill="#c9f2c0"/>
<path d="M560 1230l100-60 30 70-60 50zM530 1290l120 -20 40 60-90 60-50-60z" fill="#c9f2c0"/>
<path d="M700 1280l120-30 10 40-100 40z" fill="#c9f2c0"/>
<path d="M150 1090l270 -10M170 1120l300 140M200 1080l200 170M300 1090l-90 180M400 1100l-220 90M130 1240l340-100" stroke="#ef8d8d" stroke-width="1.500" stroke-dasharray="3 3" fill="none"/>
<path d="M175 1120c10 50 40 80 100 90 60 10 90 10 120 30-30 8-100 8-150-10s-80-60-80-100z" fill="#a9cdbf"/>
<path d="M900 1475c10-120 10-230 60-300 40-50 110-70 220-70 100 0 180 30 250 40v30c-90-10-170-30-250-30-90 0-150 20-190 70-40 60-30 170-30 260z" fill="#a9cfd4"/>
<g fill="none" stroke="#e8929a" stroke-width="12" stroke-linejoin="round">
<path d="M94 1110L400 1050M94 1295L500 1268M130 940L100 1000 200 1085 270 940M345 1000L500 960M470 940L490 1040"/>
<path d="M520 1265L760 1112 830 1080 1000 1100 1170 1090 1430 1060"/>
<path d="M830 940L860 1100 880 1470M800 940L840 1080M1180 940V1100L1240 1400"/>
<path d="M760 1112L700 1150 720 1220 860 1170"/>
<path d="M650 1395L900 1300 1060 1320 1240 1380 1430 1300M1060 1440L1240 1380M1020 1270L1100 1440"/>
<path d="M1000 1100L980 1140 1060 1240M900 960L1090 1020 1180 980 1430 1010M1100 1030L1070 1100"/>
<path d="M1420 1020L1330 1300 1280 1470M1240 1200L1400 1240M1060 1240L1430 1230"/>
<path d="M400 1300L420 1470M640 1400L600 1470M190 1470L270 1400M880 1430L1000 1470M600 1420L450 1470" stroke-width="10"/>
</g>
<g fill="none" stroke="#fbd097" stroke-width="12">
<path d="M400 1050L640 1015 850 985M650 1020C660 1090 700 1130 760 1120M620 940L650 1020M94 1040L180 1075"/>
<path d="M680 1290L850 1190M1200 1040L1430 1060M1280 1010L1400 1040M1180 940L1230 1000M1070 1350L1100 1290 1180 1240M740 1390L830 1470"/>
</g>
<g fill="none" stroke="#f8f39c" stroke-width="7">
<path d="M1190 1040L1420 1100M280 1030L340 1020M700 1310L860 1300M280 1470L340 1390 480 1370 520 1320M820 1350V1430"/>
</g>
<g fill="none" stroke="#9cd49c" stroke-width="13" stroke-linejoin="round">
<path d="M280 940L400 1050 520 1260 650 1400 720 1475M94 1460L270 1390 390 1300 520 1265"/>
<ellipse cx="400" cy="1062" rx="20" ry="12" fill="#9cd49c"/><ellipse cx="520" cy="1265" rx="18" ry="14" fill="#9cd49c"/><ellipse cx="620" cy="1385" rx="34" ry="24"/>
</g>
<path d="M110 1320V1360L300 1350 400 1290 460 1440" fill="none" stroke="#a15cc8" stroke-width="2"/>
<path d="M230 1090L260 1200 500 1250" fill="none" stroke="#2450e0" stroke-width="2" stroke-dasharray="3 3"/>
<g color="#333" font-size="20">
<text x="515" y="950" textLength="103" lengthAdjust="spacingAndGlyphs">Marylebone</text>
<text x="625" y="942" textLength="75" lengthAdjust="spacingAndGlyphs">Fitzrovia</text>
<text x="94" y="992" textLength="80" lengthAdjust="spacingAndGlyphs">ddington</text>
<text x="736" y="1054" textLength="45" lengthAdjust="spacingAndGlyphs">Soho</text>
<text x="757" y="1083" textLength="92" lengthAdjust="spacingAndGlyphs">Chinatown</text>
<text x="544" y="1100" textLength="65" lengthAdjust="spacingAndGlyphs">Mayfair</text>
<text x="812" y="1005" textLength="62" lengthAdjust="spacingAndGlyphs">St Giles</text>
<text x="917" y="966" textLength="70" lengthAdjust="spacingAndGlyphs">Holborn</text>
<text x="975" y="987" textLength="70" lengthAdjust="spacingAndGlyphs">Holborn</text>
<text x="696" y="1183" textLength="92" lengthAdjust="spacingAndGlyphs">St James's</text>
<text x="803" y="1180" font-size="26" textLength="92" lengthAdjust="spacingAndGlyphs">London</text>
<text x="1053" y="1162" textLength="103" lengthAdjust="spacingAndGlyphs">South Bank</text>
<text x="800" y="1287" textLength="110" lengthAdjust="spacingAndGlyphs">Westminster</text>
<text x="958" y="1301" textLength="78" lengthAdjust="spacingAndGlyphs">Lambeth</text>
<text x="1144" y="1268" textLength="96" lengthAdjust="spacingAndGlyphs">Southwark</text>
<text x="1290" y="1281" textLength="75" lengthAdjust="spacingAndGlyphs">Borough</text>
<text x="276" y="1332" textLength="122" lengthAdjust="spacingAndGlyphs">Knightsbridge</text>
<text x="1157" y="1425" textLength="80" lengthAdjust="spacingAndGlyphs">Elephant</text>
<text x="100" y="1452" textLength="105" lengthAdjust="spacingAndGlyphs">Kensington</text>
<text x="1300" y="967" textLength="55" lengthAdjust="spacingAndGlyphs">London</text>
</g>
</g></g>
<path d="M1361 954h23v26h-16a7 7 0 0 1-7-7z" fill="#fff"/>
<circle cx="1371" cy="965" r="4.500" fill="none" stroke="#111" stroke-width="1.800"/><path d="M1374.500 968.500l5 5.500" stroke="#111" stroke-width="2.200"/>
<rect x="1314.500" y="1153" width="69.500" height="26" rx="8" fill="#fff"/>
<circle cx="1327" cy="1163.500" r="5.500" fill="none" stroke="#111" stroke-width="1.600"/><circle cx="1327" cy="1163.500" r="1.500" fill="#111"/><path d="M1327 1155.500v3M1327 1168.500v3M1319 1163.500h3M1332 1163.500h3M1343 1163.500h12M1349 1157.500v12M1365 1163.500h12" stroke="#111" stroke-width="1.600"/>

<!-- Emergency contact -->
<text x="280" y="1249" class="h" textLength="245" lengthAdjust="spacingAndGlyphs">Emergency Contact</text>
<rect x="280" y="1279" width="235" height="202" rx="10" class="card"/>
<rect x="535" y="1279" width="234" height="202" rx="10" class="card"/>
<rect x="789" y="1279" width="235" height="202" rx="10" class="card"/>
<g fill="#222">
<path d="M381 1305h9.500a7 7 0 0 0 14 0H415v27H381z"/>
<path d="M397.500 1298l6 1.500v6a6 6 0 0 1-6 5.500 6 6 0 0 1-6-5.500v-6z"/>
</g>
<path d="M397.500 1301l1 2.200 2.300.2-1.800 1.500.6 2.300-2.100-1.200-2.100 1.200.6-2.300-1.800-1.500 2.300-.2z" fill="#fff"/>
<g fill="#fff"><rect x="385" y="1315" width="7" height="5"/><rect x="394" y="1315" width="7" height="5"/><rect x="404" y="1315" width="7" height="5"/><rect x="385" y="1323" width="7" height="5"/><rect x="404" y="1323" width="7" height="5"/><rect x="394" y="1325" width="7" height="7"/></g>
<g fill="#222"><path d="M644 1301a3 3 0 0 1 3-3h10a3 3 0 0 1 3 3v29h-16z"/><rect x="636" y="1304" width="6" height="26"/><rect x="662" y="1304" width="6" height="26"/><rect x="634" y="1330" width="36" height="2.500"/></g>
<g fill="#fff"><path d="M650.500 1302h3v3h3v3h-3v3h-3v-3h-3v-3h3z"/><rect x="647.500" y="1315" width="9" height="2"/><rect x="647.500" y="1319" width="9" height="2"/><rect x="651" y="1325" width="2" height="5"/><rect x="636" y="1309" width="3" height="2"/><rect x="636" y="1315" width="3" height="2"/><rect x="636" y="1321" width="3" height="2"/><rect x="665" y="1309" width="3" height="2"/><rect x="665" y="1315" width="3" height="2"/><rect x="665" y="1321" width="3" height="2"/></g>
<path d="M899 1298h15v7h9v27h-6v-7a6 6 0 0 0-12 0v7h-3v-9h-3a2 2 0 0 0-2 2v7h-7v-27h9z" fill="#222"/>
<path d="M906.500 1304c1 3 4 4 4 8a4 4 0 0 1-8 0c0-2 1-3 2-4 0 1.500 1 2 1 2 0-2 0-4 1-6z" fill="#fff"/>
<g class="c" font-size="16" color="#9a9a9a">
<text x="397" y="1369" textLength="175" lengthAdjust="spacingAndGlyphs">Nearest Police Station</text>
<text x="397" y="1425" textLength="130" lengthAdjust="spacingAndGlyphs">Hotline Number</text>
<text x="652" y="1369" textLength="131" lengthAdjust="spacingAndGlyphs">Nearest Hospital</text>
<text x="652" y="1425" textLength="130" lengthAdjust="spacingAndGlyphs">Hotline Number</text>
<text x="906" y="1369" textLength="157" lengthAdjust="spacingAndGlyphs">Nearest Fire Station</text>
<text x="906" y="1425" textLength="130" lengthAdjust="spacingAndGlyphs">Hotline Number</text>
</g>
<g font-size="24" color="#222">
<text x="397" y="1393" class="c m2" textLength="152" lengthAdjust="spacingAndGlyphs">51.51 N, 0.18E</text>
<text x="397" y="1449" class="c m2" textLength="45" lengthAdjust="spacingAndGlyphs">999</text>
<text x="652" y="1393" class="c m2" textLength="175" lengthAdjust="spacingAndGlyphs">51.49 N, 0.25W</text>
<text x="652" y="1449" class="c m2" textLength="41" lengthAdjust="spacingAndGlyphs">333</text>
<text x="906" y="1393" class="c m2" textLength="170" lengthAdjust="spacingAndGlyphs">51.50 N, 0.10W</text>
<text x="906" y="1449" class="c m2" textLength="46" lengthAdjust="spacingAndGlyphs">888</text>
</g>

<!-- Public safety -->
<text x="1049" y="1249" class="h" textLength="258" lengthAdjust="spacingAndGlyphs">Public Safety (Crime)</text>
<rect x="1048" y="1279" width="360" height="202" rx="10" class="card"/>
<path d="M1090.700 1423L1099.300 1417 1106.700 1368.200H1119L1124.300 1412 1135 1396.900H1145.300L1149.300 1386.800H1159L1166 1433 1171.300 1402.300H1184L1198.700 1364H1209.300L1222.700 1386.800H1232.700L1240.700 1317.300 1250 1358.100H1262.300L1271.700 1339.600H1286L1300 1306 1308 1344.700 1317.300 1375 1332.700 1363.200 1345 1376.200 1360 1343 1372.700 1375.400 1390.700 1341.700V1448H1090.700z" fill="url(#crimeA)"/>
<path d="M1090 1307.500H1385M1090 1340.500H1385M1090 1373.500H1385M1090 1406.500H1385M1090 1439.500H1385" stroke="#e6e9ef" stroke-dasharray="5 5"/>
<path d="M1090.700 1423L1099.300 1417 1106.700 1368.200H1119L1124.300 1412 1135 1396.900H1145.300L1149.300 1386.800H1159L1166 1433 1171.300 1402.300H1184L1198.700 1364H1209.300L1222.700 1386.800H1232.700L1240.700 1317.300 1250 1358.100H1262.300L1271.700 1339.600H1286L1300 1306 1308 1344.700 1317.300 1375 1332.700 1363.200 1345 1376.200 1360 1343 1372.700 1375.400 1390.700 1341.700" fill="none" stroke="#f5c400" stroke-width="1.800"/>
<g font-size="10" color="#444" class="e">
<text x="1087" y="1307" textLength="23" lengthAdjust="spacingAndGlyphs">100k</text>
<text x="1087" y="1340" textLength="19" lengthAdjust="spacingAndGlyphs">80k</text>
<text x="1087" y="1373" textLength="19" lengthAdjust="spacingAndGlyphs">60k</text>
<text x="1087" y="1406" textLength="19" lengthAdjust="spacingAndGlyphs">40k</text>
<text x="1087" y="1439" textLength="19" lengthAdjust="spacingAndGlyphs">20k</text>
</g>
<g font-size="10" color="#444" class="c">
<text x="1106.500" y="1454.500" textLength="22" lengthAdjust="spacingAndGlyphs">2012</text>
<text x="1144.500" y="1454.500" textLength="22" lengthAdjust="spacingAndGlyphs">2013</text>
<text x="1183" y="1454.500" textLength="23" lengthAdjust="spacingAndGlyphs">2014</text>
<text x="1222" y="1454.500" textLength="22" lengthAdjust="spacingAndGlyphs">2015</text>
<text x="1260" y="1454.500" textLength="22" lengthAdjust="spacingAndGlyphs">2017</text>
<text x="1299" y="1454.500" textLength="23" lengthAdjust="spacingAndGlyphs">2018</text>
<text x="1339" y="1454.500" textLength="25" lengthAdjust="spacingAndGlyphs">2020</text>
<text x="1380" y="1454.500" textLength="24" lengthAdjust="spacingAndGlyphs">2022</text>
</g>

<!-- Ride rental -->
<text x="280" y="1529.500" class="h" textLength="141" lengthAdjust="spacingAndGlyphs">Ride Rental</text>
<text x="808" y="1529.500" class="h" textLength="162" lengthAdjust="spacingAndGlyphs">Stock Market</text>
<rect x="280" y="1556" width="241" height="187" rx="10" class="card"/>
<rect x="546" y="1556" width="224" height="187" rx="10" class="card"/>
<circle cx="391" cy="1597" r="5.500" fill="none" stroke="#222" stroke-width="2.800"/>
<circle cx="409" cy="1597" r="6" fill="none" stroke="#222" stroke-width="2.800"/>
<circle cx="407" cy="1577" r="3.200" fill="#222"/>
<path d="M393 1590l8-8.500h6l3 6 4 1.500v2l-6-1-2-2-3 3 3 3v8h-3v-6.500l-5-4z" fill="#222"/>
<path d="M645 1587l3-8a3 3 0 0 1 3-2h14a3 3 0 0 1 3 2l3 8 2-.5a2 2 0 0 1 2 2l-2 1.500v11a2 2 0 0 1-2 2h-3a2 2 0 0 1-2-2v-1h-14v1a2 2 0 0 1-2 2h-3a2 2 0 0 1-2-2v-11l-2-1.500a2 2 0 0 1 2-2z" fill="#222"/>
<path d="M648.500 1586l2-6h14l2 6z" fill="#fff"/><circle cx="650" cy="1594" r="2.300" fill="#fff"/><circle cx="665" cy="1594" r="2.300" fill="#fff"/>
<g font-size="12" color="#a0a0a0">
<text x="294" y="1641" textLength="89" lengthAdjust="spacingAndGlyphs">Available Bikes</text>
<text x="294" y="1678" textLength="68" lengthAdjust="spacingAndGlyphs">On the way</text>
<text x="294" y="1714" textLength="77" lengthAdjust="spacingAndGlyphs">On Servicing</text>
<text x="560" y="1641" textLength="83" lengthAdjust="spacingAndGlyphs">Available Cars</text>
<text x="560" y="1678" textLength="68" lengthAdjust="spacingAndGlyphs">On the way</text>
<text x="560" y="1714" textLength="77" lengthAdjust="spacingAndGlyphs">On Servicing</text>
</g>
<g font-size="25" color="#222">
<text x="429" y="1641" class="c m2" textLength="57" lengthAdjust="spacingAndGlyphs">6526</text>
<text x="429" y="1678" class="c m2" textLength="52" lengthAdjust="spacingAndGlyphs">1376</text>
<text x="429" y="1714" class="c m2" textLength="31" lengthAdjust="spacingAndGlyphs">98</text>
<text x="683" y="1641" class="c m2" textLength="39" lengthAdjust="spacingAndGlyphs">510</text>
<text x="683" y="1678" class="c m2" textLength="45" lengthAdjust="spacingAndGlyphs">248</text>
<text x="683" y="1714" class="c m2" textLength="30" lengthAdjust="spacingAndGlyphs">42</text>
</g>
<g font-size="16" color="#444" class="e">
<text x="507" y="1641" textLength="33" lengthAdjust="spacingAndGlyphs">82%</text>
<text x="507" y="1678" textLength="29" lengthAdjust="spacingAndGlyphs">17%</text>
<text x="507" y="1714" textLength="30" lengthAdjust="spacingAndGlyphs">01%</text>
<text x="755.500" y="1641" textLength="33" lengthAdjust="spacingAndGlyphs">64%</text>
<text x="755.500" y="1678" textLength="28" lengthAdjust="spacingAndGlyphs">31%</text>
<text x="755.500" y="1714" textLength="33" lengthAdjust="spacingAndGlyphs">05%</text>
</g>

<!-- Electricity -->
<rect x="280" y="1771" width="490" height="85" rx="10" class="card"/>
<path d="M326 1797L307 1817 319 1818 313 1830 334.500 1811 322 1810z" fill="#111"/>
<text x="349" y="1802" font-size="22" class="m" color="#222" textLength="103" lengthAdjust="spacingAndGlyphs">Electricity</text>
<text x="349" y="1826" font-size="22" class="m" color="#222" textLength="131" lengthAdjust="spacingAndGlyphs">Supply (MW)</text>
<path d="M493 1786V1840" stroke="#bdbdbd" stroke-width="2.500"/>
<g font-size="18" color="#444" class="c">
<text x="536" y="1796" textLength="71" lengthAdjust="spacingAndGlyphs">This Year</text>
<text x="629" y="1796" textLength="38" lengthAdjust="spacingAndGlyphs">2022</text>
<text x="717" y="1796" textLength="34" lengthAdjust="spacingAndGlyphs">2021</text>
</g>
<g font-size="25" color="#222">
<text x="536" y="1826" class="c m2" textLength="66" lengthAdjust="spacingAndGlyphs">23951</text>
<text x="629" y="1826" class="c m2" textLength="65" lengthAdjust="spacingAndGlyphs">21557</text>
<text x="717" y="1826" class="c m2" textLength="61" lengthAdjust="spacingAndGlyphs">21241</text>
</g>

<!-- Stock -->
<rect x="808" y="1556" width="600" height="300" rx="10" class="card"/>
<path d="M857 1707.500C885 1693 920 1660 945 1655C965 1652 970 1665 985 1680C1000 1698 1015 1712 1036 1719C1048 1723 1055 1726 1067 1726C1085 1726 1108 1710 1123 1709C1140 1708 1155 1735 1165 1755C1169 1762 1173 1765 1178 1758C1190 1746 1225 1690 1247 1662C1255 1656 1262 1652 1270 1653C1280 1654 1290 1675 1303 1697C1308 1703 1313 1705 1320 1705C1335 1705 1345 1694 1356 1687V1816H857z" fill="#f6f9fd"/>
<path d="M857 1707.500C885 1693 920 1660 945 1655C965 1652 970 1665 985 1680C1000 1698 1015 1712 1036 1719C1048 1723 1055 1726 1067 1726C1085 1726 1108 1710 1123 1709C1140 1708 1155 1735 1165 1755C1169 1762 1173 1765 1178 1758C1190 1746 1225 1690 1247 1662C1255 1656 1262 1652 1270 1653C1280 1654 1290 1675 1303 1697C1308 1703 1313 1705 1320 1705C1335 1705 1345 1694 1356 1687" fill="none" stroke="#f5c400" stroke-width="2"/>
<path d="M855 1600.500V1816H1364" fill="none" stroke="#222" stroke-width="2.600"/>
<text x="855" y="1587" font-size="16" class="m" color="#111" textLength="113" lengthAdjust="spacingAndGlyphs">Stock (Yahoo)</text>
<text x="1287" y="1586" font-size="10.500" class="m" color="#111" textLength="76" lengthAdjust="spacingAndGlyphs">FTSE 100 Index</text>
<text x="1294" y="1604" font-size="22" color="#111" textLength="69" lengthAdjust="spacingAndGlyphs">7121.88</text>
<text x="1302" y="1669" font-size="10.500" class="m" color="#111" textLength="61" lengthAdjust="spacingAndGlyphs">91.22 (1.28%)</text>
<g font-size="10.500" color="#333" class="c">
<text x="855" y="1827.500" textLength="23" lengthAdjust="spacingAndGlyphs">2014</text>
<text x="918" y="1827.500" textLength="22" lengthAdjust="spacingAndGlyphs">2015</text>
<text x="981" y="1827.500" textLength="23" lengthAdjust="spacingAndGlyphs">2016</text>
<text x="1043.500" y="1827.500" textLength="22" lengthAdjust="spacingAndGlyphs">2017</text>
<text x="1107" y="1827.500" textLength="22" lengthAdjust="spacingAndGlyphs">2018</text>
<text x="1170" y="1827.500" textLength="22" lengthAdjust="spacingAndGlyphs">2019</text>
<text x="1234" y="1827.500" textLength="24" lengthAdjust="spacingAndGlyphs">2020</text>
<text x="1296" y="1827.500" textLength="22" lengthAdjust="spacingAndGlyphs">2021</text>
<text x="1360" y="1827.500" textLength="24" lengthAdjust="spacingAndGlyphs">2022</text>
</g>

<!-- Breaking news -->
<text x="280" y="1904" class="h" textLength="186" lengthAdjust="spacingAndGlyphs">Breaking News</text>
<path d="M1363 1896l-6 7 6 7M1401 1896l6 7-6 7" fill="none" stroke="#6d6d6d" stroke-width="2.600"/>
<rect x="280" y="1930" width="361" height="326" rx="10" class="card"/>
<rect x="663" y="1930" width="361" height="326" rx="10" class="card"/>
<rect x="1046" y="1930" width="361" height="326" rx="10" class="card"/>

<g clip-path="url(#cN1)"><g transform="translate(260 1870) scale(.3827 .3333)">
<g filter="url(#b14)"><rect x="100" y="235" width="850" height="550" fill="#5d6a64"/><rect x="100" y="240" width="500" height="120" fill="#4a6488"/><rect x="600" y="240" width="350" height="110" fill="#a54742"/><rect x="860" y="380" width="90" height="400" fill="#5c5c50"/><rect x="890" y="680" width="60" height="100" fill="#b82a2a"/></g>
<g filter="url(#b1)">
<path d="M105 560c20-40 60-40 100-30l30 250H105z" fill="#ecebe0"/>
<ellipse cx="158" cy="470" rx="50" ry="58" fill="#4a2e22"/>
<path d="M108 460c0-40 40-60 70-60 30 0 40 20 36 30-40 0-80 10-106 30z" fill="#1e5a3d"/>
<path d="M210 470l170-70 170 130-20 60-80 190H260l-20-170-60-30c-20-40 0-90 30-110z" fill="#e9e8d8"/>
<ellipse cx="340" cy="330" rx="85" ry="55" fill="#f7f7f2"/><ellipse cx="340" cy="375" rx="100" ry="20" fill="#f7f7f2" stroke="#1f7a46" stroke-width="4"/>
<path d="M440 370c40-30 110-60 130-40l30 70-100-10z" fill="#f3f3ec"/>
<path d="M450 400c30-30 110-20 130 30l-10 70-110 10z" fill="#1b1412"/>
<ellipse cx="655" cy="295" rx="40" ry="52" fill="#37261f"/>
<path d="M610 340l100 10 20 60H620z" fill="#b07a5e"/>
<path d="M700 350c10-50 60-80 110-70 30 10 40 40 30 70z" fill="#37462c"/>
<ellipse cx="760" cy="395" rx="42" ry="60" fill="#b0775a"/>
<path d="M740 450l90-40 70 160 20 210H740l-30-190z" fill="#ece9d6"/>
<ellipse cx="650" cy="440" rx="62" ry="62" fill="#a77056"/>
<path d="M595 370c40-20 120 0 130 50l-15 30-100-30z" fill="#1b5b3f"/>
<path d="M600 500l110-10 40 120-10 170H580l-50-150z" fill="#eeebd8"/>
<path d="M450 420l100 50 40 50-30 80-40 180H450z" fill="#e6e5d2"/>
<path d="M500 570C600 520 680 600 750 600" fill="none" stroke="#2d1b14" stroke-width="38" stroke-linecap="round"/>
<path d="M360 650c40-30 70-30 100-10l-10 40-70-10z" fill="#a26a4d"/>
<path d="M460 680c50-20 130-50 190-110l20 50-100 90-110 0z" fill="#f1eedd"/>
<path d="M180 600l60 30-30 30z" fill="#35211a"/>
</g>
<g color="#1c8a52" fill-opacity=".85"><text x="265" y="500" font-size="34" textLength="100" lengthAdjust="spacingAndGlyphs" transform="rotate(-12 265 500)" style="font-family:'Liberation Serif',serif">ROYAL</text><text x="270" y="530" font-size="32" textLength="92" lengthAdjust="spacingAndGlyphs" transform="rotate(-10 270 530)" style="font-family:'Liberation Serif',serif">GREEN</text>
<text x="275" y="600" font-size="100" class="b" textLength="85" lengthAdjust="spacingAndGlyphs" transform="rotate(-8 275 600)">25</text>
<text x="460" y="610" font-size="80" class="b" textLength="90" lengthAdjust="spacingAndGlyphs">33</text>
<text x="690" y="690" font-size="100" class="b" textLength="44" lengthAdjust="spacingAndGlyphs">6</text></g>
</g></g>

<g clip-path="url(#cN2)">
<rect x="683" y="1950" width="320" height="180" fill="url(#seis)"/>
<path d="M683 2130L1003 2110V2130z" fill="#e6e6e6"/>
<path d="M700 1950l200 180M800 1950l200 180M683 2020l120 110M683 1990L903 1950M683 2060L1003 2000M710 2130L1003 2060" stroke="#c6c6c6" stroke-width=".8" stroke-dasharray="3 3"/>
<path d="M683 2110c20 10 100 20 120-20l-50 20z" fill="#c4c4c4" filter="url(#b6)"/>
<path d="M683 2092L761 2064V2069L700 2096 683 2104z" fill="#8e8e8e"/>
<path d="M683 2080H696V2096L683 2106z" fill="#555"/>
<path d="M761 2066L764 2062 768 2072 770 2058 774 2076 776 2054 781 2078 781 2040 788 2080 775 2022 801 2092 792 2030 806 2070 790 2015 812 2075 798 2010 818 2070 793 2012 830 2090 806 2005 840 2090 815 2005 850 2075 818 2000 838 2050 825 2000 862 2060 830 1998 870 2070 845 1995 890 2085 855 1995 905 2060 865 1990 925 2060 878 1993 943 2080 872 2000 925 2060 880 1995 936 2033 890 2000 915 2040 895 2005 910 2025 915 2012 930 2005 948 1995 950 1985 970 2000 955 1975 985 2002 960 1970 990 1995 970 1975 995 1990 1003 1973" fill="none" stroke="#151515" stroke-width="1" stroke-linejoin="round"/>
<ellipse cx="850" cy="2040" rx="16" ry="8" fill="#151515" opacity=".5" filter="url(#b2)" transform="rotate(35 850 2040)"/>
<ellipse cx="893" cy="2015" rx="14" ry="8" fill="#151515" opacity=".65" filter="url(#b2)" transform="rotate(35 893 2015)"/>
</g>

<g clip-path="url(#cN3)"><g transform="translate(840 1870) scale(.3827 .3333)">
<rect x="585" y="235" width="850" height="400" fill="url(#crowd)"/>
<rect x="585" y="400" width="850" height="225" fill="url(#cr)" opacity=".55"/>
<rect x="585" y="260" width="850" height="90" fill="url(#cr)" opacity=".22"/>
<path d="M591 380L1427 320V355L591 405z" fill="#5c5960"/>
<path d="M915 355L1427 325V350L915 385z" fill="#8e8a90"/>
<path d="M591 620H1427V642H591z" fill="#c4262e"/>
<path d="M591 640H1427V785H591z" fill="#3e7c2b"/>
<path d="M591 745C800 740 1100 720 1427 705" stroke="#b9d0a8" stroke-width="4" fill="none"/>
<g filter="url(#b1)">
<ellipse cx="1160" cy="250" rx="22" ry="15" fill="#e8a82a"/>
<path d="M720 400l60-35 50 20 20 40 30 20 50 120-40 30-50 60-90 40-110 40-30-10 70-60 70-50 20-130z" fill="#18181c"/>
<ellipse cx="773" cy="325" rx="18" ry="24" fill="#7a5644"/>
<ellipse cx="858" cy="365" rx="20" ry="24" fill="#a57a60"/>
<path d="M800 400l70-20 30 80-30 60-70 30z" fill="#1c1c22"/>
<ellipse cx="820" cy="475" rx="22" ry="26" fill="#8a6450"/>
<path d="M770 510l80-10 50 90-60 30-80 40z" fill="#15151a"/>
<path d="M600 690L720 620 770 630 720 670z" fill="#1b1b1f"/>
<path d="M675 695l60-15 20 20z" fill="#bf2a2a"/><path d="M592 690l30-12 8 15z" fill="#bf2a2a"/>
<ellipse cx="815" cy="605" rx="30" ry="34" fill="#0d0c0c"/>
<path d="M660 760L800 650 900 640 1030 640 1170 570 1185 600 1060 690 1040 775 950 778 850 720z" fill="#1f1f24"/>
<path d="M1000 620L1030 640 1000 710 980 690z" fill="#b9babd"/>
<path d="M985 680C1040 720 1120 740 1190 760L1380 775 1370 795 1100 790 990 735z" fill="#f0e8dc"/>
<path d="M970 690l30-10 20 50-30 20z" fill="#c22"/>
<path d="M1140 740l40 0-10 40-40 0z" fill="#c22"/>
<ellipse cx="1385" cy="720" rx="48" ry="55" fill="#1a0f0c"/>
<path d="M1220 430l40-35 50 15 25 100-25 20-60 10z" fill="#c8202e"/>
<ellipse cx="1245" cy="375" rx="26" ry="32" fill="#38231a"/>
<path d="M1265 400l35-10 20 90-30 10z" fill="#f4f4f4"/>
<path d="M1232 525l105-10 10 50-50 20-60-10z" fill="#f1f1f1"/>
<path d="M1245 580l30 80 20 10M1320 570l35 80" stroke="#7a4a38" stroke-width="16" fill="none"/>
<path d="M1360 450l50-30 17 10v170l-50-10z" fill="#18181c"/>
<ellipse cx="925" cy="465" rx="16" ry="20" fill="#7a5644"/>
<path d="M880 500l45-20 50 30-15 60-70 0z" fill="#bd2630"/>
<path d="M892 560h70l5 55-25 10-45-15z" fill="#ececec"/>
<path d="M1025 500h60v80h-60z" fill="#16161a"/>
<ellipse cx="1053" cy="465" rx="13" ry="16" fill="#5c3a2a"/>
<path d="M1095 525l50-15 10 70-60 0z" fill="#c0323a"/>
<path d="M1160 500h30v50h-30z" fill="#343038"/>
<path d="M1350 450h40v130h-40z" fill="#16161a"/>
</g></g></g>

<rect x="300" y="2149" width="32" height="31" rx="3" fill="#bb1111"/>
<g color="#fff"><text x="316" y="2160" class="c b" font-size="8.500" textLength="19" lengthAdjust="spacingAndGlyphs">BBC</text><text x="316" y="2169.500" class="c" font-size="9" textLength="25" lengthAdjust="spacingAndGlyphs">NEWS</text></g>
<rect x="683" y="2149" width="32" height="31" rx="3" fill="#fa9000"/>
<path d="M699 2152c2 5 7 9 7 15 0 6-4 10-7 10s-7-4-7-10c0-6 5-10 7-15z" fill="#fbd9a0"/><path d="M696 2160c3 3 5 8 2 14M701 2162c-1 4 0 8 2 10" stroke="#fa9000" fill="none"/>
<rect x="1066" y="2149" width="32" height="31" rx="3" fill="#cc0000"/>
<text x="1082" y="2164.500" class="c m2" font-size="14" color="#fff" textLength="24" lengthAdjust="spacingAndGlyphs">CNN</text>
<g font-size="17" color="#2d2d2d">
<text x="340" y="2156" class="m" textLength="240" lengthAdjust="spacingAndGlyphs">South Africa beat India by an</text>
<text x="340" y="2175" class="m" textLength="173" lengthAdjust="spacingAndGlyphs">innings in three days</text>
<text x="723" y="2156" class="m" textLength="255" lengthAdjust="spacingAndGlyphs">Small earthquake hits near US-</text>
<text x="723" y="2175" class="m" textLength="122" lengthAdjust="spacingAndGlyphs">Canada border</text>
<text x="1106" y="2156" class="m" textLength="271" lengthAdjust="spacingAndGlyphs">Premier League plans primetime</text>
<text x="1106" y="2175" class="m" textLength="189" lengthAdjust="spacingAndGlyphs">Saturday night kick-off</text>
</g>
<g fill="none" stroke="#777" stroke-width="1.200">
<circle cx="308" cy="2228" r="6.500"/><path d="M308 2224v4.500l3 2"/>
<circle cx="691" cy="2228" r="6.500"/><path d="M691 2224v4.500l3 2"/>
<circle cx="1074" cy="2228" r="6.500"/><path d="M1074 2224v4.500l3 2"/>
</g>
<g font-size="13" color="#8a8a8a">
<text x="322" y="2228" textLength="47" lengthAdjust="spacingAndGlyphs">10h ago</text>
<text x="706" y="2228" textLength="41" lengthAdjust="spacingAndGlyphs">2h ago</text>
<text x="1089" y="2228" textLength="39" lengthAdjust="spacingAndGlyphs">1h ago</text>
</g>
<g font-size="13" color="#1c2a58">
<text x="555" y="2228" class="m" textLength="66" lengthAdjust="spacingAndGlyphs">Read More</text>
<text x="938" y="2228" class="m" textLength="66" lengthAdjust="spacingAndGlyphs">Read More</text>
<text x="1321" y="2228" class="m" textLength="66" lengthAdjust="spacingAndGlyphs">Read More</text>
</g>

<!-- Footer -->
<rect x="279" y="2281" width="1128" height="80" rx="10" class="card"/>
<g fill="#eeeff1"><circle cx="326" cy="2321" r="15"/><circle cx="364" cy="2321" r="15"/><circle cx="402" cy="2321" r="15"/><circle cx="440" cy="2321" r="15"/></g>
<circle cx="326" cy="2321" r="9.500" fill="#0f3569"/>
<path d="M327 2331v-8h2.600l.4-3h-3v-2c0-.9.300-1.500 1.500-1.500h1.600v-2.700h-2.400c-2.500 0-4 1.500-4 4v2.200h-2.500v3h2.500v8z" fill="#eeeff1"/>
<rect x="355" y="2312" width="18" height="18" rx="4" fill="#0f3569"/><circle cx="364" cy="2321" r="3.800" fill="none" stroke="#eeeff1" stroke-width="1.500"/><circle cx="369.500" cy="2315.500" r="1" fill="#eeeff1"/>
<path transform="translate(392 2311) scale(.83)" d="M23.950 4.570a10 10 0 0 1-2.820.77 4.960 4.960 0 0 0 2.160-2.720c-.95.55-2 .96-3.120 1.200a4.920 4.920 0 0 0-8.380 4.480C7.690 8.100 4.070 6.130 1.640 3.160a4.820 4.820 0 0 0-.67 2.480c0 1.710.87 3.210 2.190 4.100a4.900 4.900 0 0 1-2.230-.61v.06c0 2.390 1.700 4.380 3.950 4.830a5 5 0 0 1-2.210.08 4.940 4.940 0 0 0 4.600 3.420A9.870 9.870 0 0 1 0 19.540a13.940 13.940 0 0 0 7.550 2.210c9.050 0 14-7.500 14-13.980 0-.21 0-.42-.02-.63a9.940 9.940 0 0 0 2.460-2.550z" fill="#0f3569"/>
<rect x="432" y="2313" width="16" height="16" rx="1.500" fill="#0f3569"/>
<text x="440" y="2321" class="c b" font-size="13" color="#eeeff1" textLength="11" lengthAdjust="spacingAndGlyphs">in</text>
<text x="617" y="2320" class="b" font-size="17" color="#2f3b85" textLength="138" lengthAdjust="spacingAndGlyphs">AIRFRANCE</text>
<path d="M760 2327l9-13h7l-8 11z" fill="#e8302a"/>
<circle cx="792" cy="2320" r="10" fill="none" stroke="#6f95cc" stroke-width=".8" stroke-dasharray="2 1.500"/><path d="M785 2320l14-4M786 2323l13-4M788 2326l10-4" stroke="#6f95cc" stroke-width="1"/>
<path d="M826 2305h8l3 15 4-15h6l4 15 3-15h4l-6 28h-8l-3-14-4 14h-7z" fill="url(#wu)"/>
<path d="M856 2318h5v7c0 3 2 4 4 4s4-1 4-4v-10h7v11c0 5-5 9-11 9s-9-4-9-9z" fill="#1f9ae0"/><path d="M856 2325c0 5 3 8 9 8" stroke="#f5c020" stroke-width="3" fill="none"/>
<path d="M866 2302c2 3 3 5 3 7a3 3 0 0 1-6 0c0-2 1-4 3-7z" fill="#1f9ae0"/>
<text x="826" y="2339.500" font-size="4.500" color="#555" textLength="52" lengthAdjust="spacingAndGlyphs">WEATHER UNDERGROUND</text>
<rect x="902" y="2307" width="39" height="13.500" fill="#3b479b"/><rect x="902" y="2320.500" width="39" height="13.500" fill="#b75f3e"/>
<g font-size="11" color="#fff"><text x="921.500" y="2313.500" class="c b" textLength="23" lengthAdjust="spacingAndGlyphs" style="font-family:'Liberation Serif',serif">SKY</text><text x="921.500" y="2327" class="c b" textLength="33" lengthAdjust="spacingAndGlyphs" style="font-family:'Liberation Serif',serif">NEWS</text></g>
<path d="M980 2322c6-12 22-12 29 0" fill="none" stroke="#d5231c" stroke-width="2.200"/>
<text x="968" y="2324" font-size="8" class="b" color="#333" textLength="55" lengthAdjust="spacingAndGlyphs">MAP&amp;GUIDE</text>
<text x="968" y="2330" font-size="3.500" color="#c33" textLength="42" lengthAdjust="spacingAndGlyphs">THE INDEPENDENT COMPANY</text>
<text x="1187" y="2319" font-size="34" textLength="87" lengthAdjust="spacingAndGlyphs" style="font-family:'Liberation Serif',serif"><tspan fill="#2f6fde">G</tspan><tspan fill="#d8342a">o</tspan><tspan fill="#f2b418">o</tspan><tspan fill="#2f6fde">g</tspan><tspan fill="#2d9c45">l</tspan><tspan fill="#d8342a">e</tspan></text>
<rect x="1299" y="2306" width="77" height="30" fill="#0a5cff"/>
<text x="1308" y="2320.500" class="b" font-size="15" color="#fff" textLength="59" lengthAdjust="spacingAndGlyphs">Bēhance</text>
</svg>
</body>
</html>
